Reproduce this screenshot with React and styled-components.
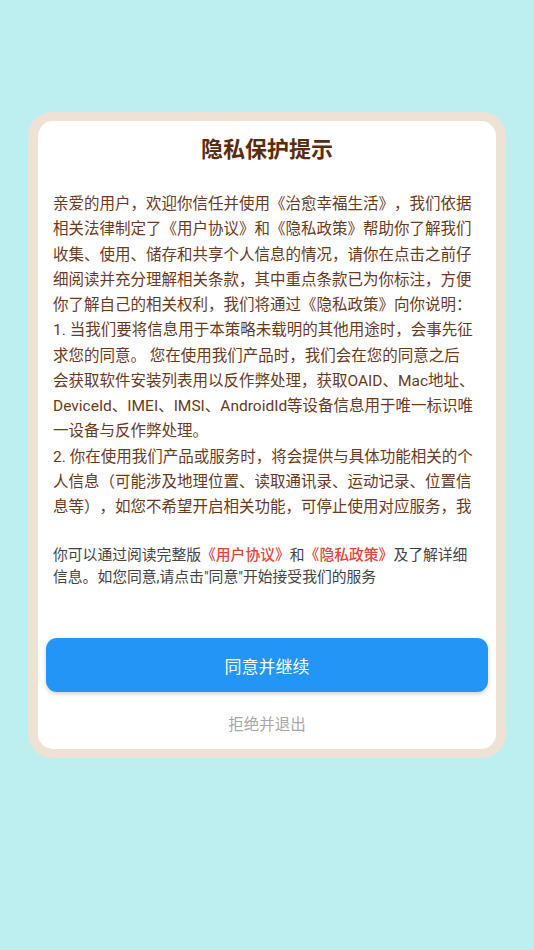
import React from "react";
import styled, { createGlobalStyle } from "styled-components";

const GlobalStyle = createGlobalStyle`
    html, body {
        margin: 0;
        padding: 0;
        background: #bdeef0;
    }
    body {
        font-family: Roboto, "Noto Sans CJK SC", sans-serif;
        text-spacing-trim: space-all;
        font-feature-settings: normal;
    }
`;

const Page = styled.div`
    min-height: 950px;
    display: flex;
    justify-content: center;
    align-items: flex-start;
    padding-top: 112px;
    box-sizing: border-box;
`;

const Frame = styled.div`
    width: 478px;
    padding: 9px 10px;
    box-sizing: border-box;
    background: #eee2d4;
    border-radius: 24px;
`;

const Card = styled.div`
    display: flex;
    flex-direction: column;
    background: #ffffff;
    border-radius: 15px;
    padding: 14px 8px 13px;
`;

const Title = styled.h1`
    margin: 0;
    text-align: center;
    font-size: 22px;
    line-height: 30px;
    font-weight: 700;
    color: #5b2b0e;
`;

const Scroll = styled.div`
    margin: 27px 7px 0;
    height: 329px;
    overflow: hidden;
`;

const Body = styled.p`
    margin: 0;
    font-size: 15.5px;
    line-height: 25.25px;
    color: #6b3a1d;
    white-space: nowrap;
    text-spacing-trim: space-all;
`;

const Footer = styled.p`
    margin: 23px 7px 0;
    font-size: 14.8px;
    line-height: 22px;
    color: #444444;
    text-spacing-trim: space-all;
`;

const Link = styled.span`
    color: #e5443a;
    font-weight: 500;
`;

const AgreeButton = styled.button`
    margin-top: 50px;
    height: 54px;
    border: none;
    border-radius: 11px;
    background: #2295f7;
    box-shadow: 0 2px 4px rgba(0, 0, 0, 0.18);
    color: #ffffff;
    font-family: inherit;
    font-size: 17px;
`;

const RefuseButton = styled.button`
    margin-top: 22px;
    height: 22px;
    padding: 0;
    border: none;
    background: none;
    color: #a8a8a8;
    font-family: inherit;
    font-size: 15.5px;
    line-height: 22px;
`;

const lines = [
    "亲爱的用户，欢迎你信任并使用《治愈幸福生活》，我们依据",
    "相关法律制定了《用户协议》和《隐私政策》帮助你了解我们",
    "收集、使用、储存和共享个人信息的情况，请你在点击之前仔",
    "细阅读并充分理解相关条款，其中重点条款已为你标注，方便",
    "你了解自己的相关权利，我们将通过《隐私政策》向你说明：",
    "1. 当我们要将信息用于本策略未载明的其他用途时，会事先征",
    "求您的同意。 您在使用我们产品时，我们会在您的同意之后",
    "会获取软件安装列表用以反作弊处理，获取OAID、Mac地址、",
    "DeviceId、IMEI、IMSI、AndroidId等设备信息用于唯一标识唯",
    "一设备与反作弊处理。",
    "2. 你在使用我们产品或服务时，将会提供与具体功能相关的个",
    "人信息（可能涉及地理位置、读取通讯录、运动记录、位置信",
    "息等），如您不希望开启相关功能，可停止使用对应服务，我",
];

export default function App() {
    return (
        <>
            <GlobalStyle />
            <Page>
                <Frame>
                    <Card>
                        <Title>隐私保护提示</Title>
                        <Scroll>
                            <Body>
                                {lines.map((line, i) => (
                                    <React.Fragment key={i}>
                                        {line}
                                        <br />
                                    </React.Fragment>
                                ))}
                            </Body>
                        </Scroll>
                        <Footer>
                            你可以通过阅读完整版<Link>《用户协议》</Link>和
                            <Link>《隐私政策》</Link>及了解详细信息。如您同意,请点击"同意"开始接受我们的服务
                        </Footer>
                        <AgreeButton>同意并继续</AgreeButton>
                        <RefuseButton>拒绝并退出</RefuseButton>
                    </Card>
                </Frame>
            </Page>
        </>
    );
}
